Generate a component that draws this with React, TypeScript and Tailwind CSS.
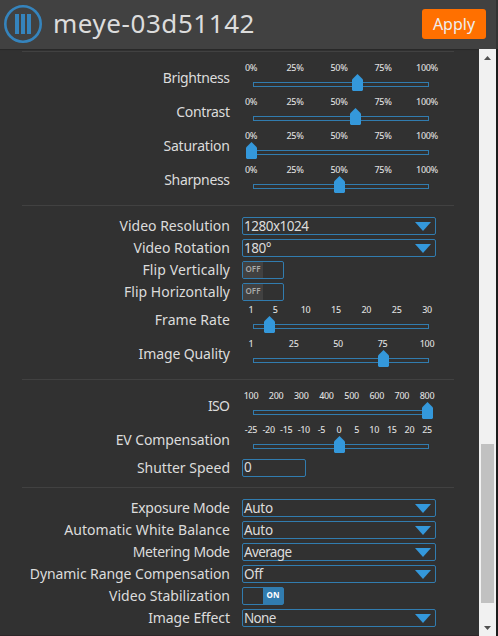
import React from 'react';

function Label({ text, spacing }: { text: string; spacing: number }) {
  return (
    <div
      className="flex w-[230px] shrink-0 items-center justify-end whitespace-nowrap text-[14px] leading-[18px] text-[#dcdcdc]"
    >
      <span style={{ letterSpacing: spacing, marginRight: -spacing }}>{text}</span>
    </div>
  );
}

function Row({ label, spacing = 0, children }: { label: string; spacing?: number; children: React.ReactNode }) {
  return (
    <div className="flex h-[22px] items-center">
      <div className="flex w-[242px]">
        <Label text={label} spacing={spacing} />
      </div>
      {children}
    </div>
  );
}

function SliderRow({ label, spacing = 0, ticks, thumb }: { label: string; spacing?: number; ticks: string[]; thumb: number }) {
  const values = ticks.map((t) => parseInt(t, 10));
  const min = values[0];
  const range = values[values.length - 1] - min;
  return (
    <div className="flex h-[34px] items-center">
      <div className="flex w-[253px]">
        <Label text={label} spacing={spacing} />
      </div>
      <div className="relative h-[34px] w-[176px]">
        {ticks.map((t, i) => (
          <span
            key={t}
            className="absolute top-[1px] -translate-x-1/2 text-[9px] font-medium leading-[12px] tracking-[-0.3px] text-[#dcdcdc]"
            style={{ left: -2 + (176 * (values[i] - min)) / range }}
          >
            {t}
          </span>
        ))}
        <div className="mt-[21px] h-[5px] border border-[#317caf]" />
        <svg className="absolute top-[13px]" style={{ left: thumb - 253 }} width="11" height="17" viewBox="0 0 11 17">
          <path d="M5.5 0L11 5.5V16L10 17H1L0 16V5.5Z" fill="#3498db" />
        </svg>
      </div>
    </div>
  );
}

function Select({ value, spacing = 0 }: { value: string; spacing?: number }) {
  return (
    <div className="flex h-[18px] w-[194px] items-center justify-between rounded-[2px] border border-[#317caf] pl-[1px] pr-[4px] text-[13.5px] leading-4 text-[#dcdcdc]">
      <span className="-mt-px" style={{ letterSpacing: spacing }}>{value}</span>
      <svg className="mt-px" width="16" height="9" viewBox="0 0 16 9">
        <path d="M0 0H16L8 9Z" fill="#3498db" />
      </svg>
    </div>
  );
}

function Toggle({ on }: { on?: boolean }) {
  return (
    <div className={`flex h-[18px] w-[42px] rounded-[2px] border border-[#317caf] ${on ? 'justify-end' : ''}`}>
      <div
        className={`flex w-[20px] justify-center text-[8px] leading-[14px] ${
          on ? 'bg-[#317caf] font-bold text-white' : 'bg-[#414141] font-semibold text-[#aaa]'
        }`}
      >
        {on ? 'ON' : 'OFF'}
      </div>
    </div>
  );
}

function Divider() {
  return <div className="mb-[9px] ml-[22px] mt-[8px] h-px w-[432px] bg-[#414141]" />;
}

const percent = ['0%', '25%', '50%', '75%', '100%'];

export default function App() {
  return (
    <div className="flex h-[636px] w-[498px] flex-col overflow-hidden bg-[#313131] font-['Noto_Sans','Open_Sans',sans-serif]">
      <header className="flex h-[49px] shrink-0 items-center justify-between border-r-2 border-[#333] bg-[#414141] pl-[4px] pr-[10px]">
        <div className="flex items-center">
          <svg width="38" height="38" viewBox="0 0 38 38" className="-mt-px">
            <circle cx="19" cy="19" r="17.7" fill="none" stroke="#3584bd" strokeWidth="2.6" />
            <path d="M11 9h4v20h-4zM17 9h4v20h-4zM23 9h4v20h-4z" fill="#3584bd" />
          </svg>
          <h1 className="-mt-[3px] ml-[11px] whitespace-nowrap text-[26px] leading-[32px] tracking-[0.55px] text-[#dcdcdc]">meye-03d51142</h1>
        </div>
        <button className="-mt-px h-[30px] w-[64px] rounded-[3px] bg-[#ff7000] text-[16px] leading-[28px] text-[#eee]">Apply</button>
      </header>
      <div className="flex h-[587px]">
        <main className="w-[479px] border-b border-[#2d2629] shadow-[inset_0_2px_1px_-1px_#292929]">
          <div className="mb-[9px] ml-[22px] mt-[2px] h-px w-[432px] bg-[#414141]" />
          <SliderRow label="Brightness" spacing={-0.4} ticks={percent} thumb={352} />
          <SliderRow label="Contrast" spacing={-0.35} ticks={percent} thumb={350} />
          <SliderRow label="Saturation" spacing={-0.2} ticks={percent} thumb={246} />
          <SliderRow label="Sharpness" spacing={-0.35} ticks={percent} thumb={334} />
          <Divider />
          <Row label="Video Resolution"><Select value="1280x1024" spacing={-0.5} /></Row>
          <Row label="Video Rotation"><Select value="180°" spacing={-0.5} /></Row>
          <Row label="Flip Vertically" spacing={0.1}><Toggle /></Row>
          <Row label="Flip Horizontally"><Toggle /></Row>
          <SliderRow label="Frame Rate" spacing={0.05} ticks={['1', '5', '10', '15', '20', '25', '30']} thumb={264} />
          <SliderRow label="Image Quality" spacing={-0.1} ticks={['1', '25', '50', '75', '100']} thumb={378} />
          <Divider />
          <SliderRow label="ISO" spacing={-0.7} ticks={['100', '200', '300', '400', '500', '600', '700', '800']} thumb={422} />
          <SliderRow label="EV Compensation" spacing={-0.1} ticks={['-25', '-20', '-15', '-10', '-5', '0', '5', '10', '15', '20', '25']} thumb={334} />
          <Row label="Shutter Speed">
            <div className="h-[18px] w-[64px] rounded-[2px] border border-[#317caf] pl-[1px] text-[13.5px] leading-[15px] text-[#dcdcdc]">0</div>
          </Row>
          <Divider />
          <Row label="Exposure Mode" spacing={-0.25}><Select value="Auto" spacing={-0.3} /></Row>
          <Row label="Automatic White Balance" spacing={0.05}><Select value="Auto" spacing={-0.3} /></Row>
          <Row label="Metering Mode" spacing={-0.35}><Select value="Average" spacing={-0.65} /></Row>
          <Row label="Dynamic Range Compensation" spacing={-0.08}><Select value="Off" spacing={-0.3} /></Row>
          <Row label="Video Stabilization"><Toggle on /></Row>
          <Row label="Image Effect" spacing={-0.1}><Select value="None" spacing={-0.7} /></Row>
        </main>
        <aside className="flex w-[17px] flex-col items-center bg-[#f1f1f1]">
          <svg className="mt-[7px]" width="7" height="4" viewBox="0 0 7 4"><path d="M3.5 0L7 4H0Z" fill="#505050" /></svg>
          <div className="mt-[384px] h-[159px] w-[13px] bg-[#c1c1c1]" />
          <svg className="mt-[23px]" width="7" height="4" viewBox="0 0 7 4"><path d="M0 0H7L3.5 4Z" fill="#505050" /></svg>
        </aside>
        <div className="w-[2px] bg-[#1c1c1c]" />
      </div>
    </div>
  );
}
